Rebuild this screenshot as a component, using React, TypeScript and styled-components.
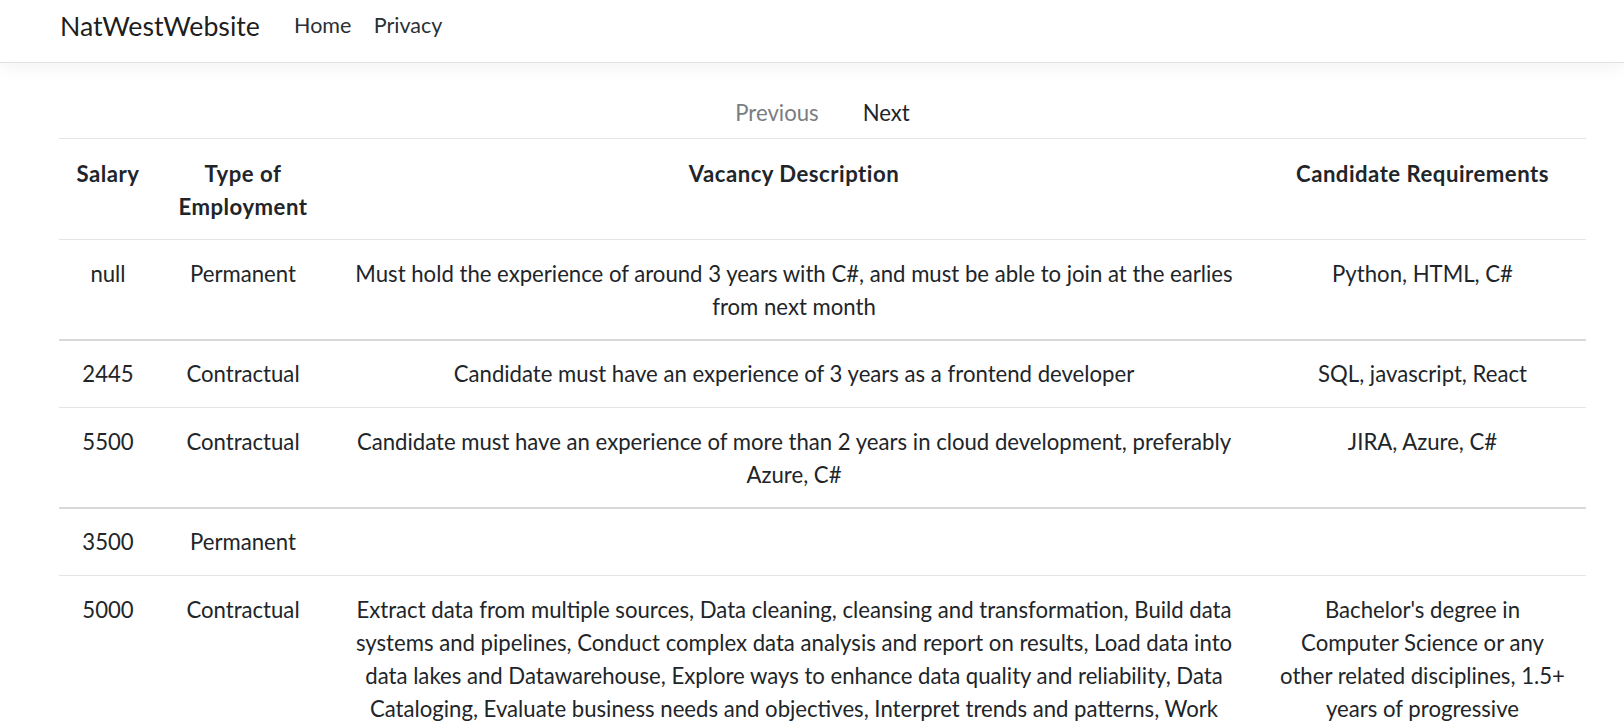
import React from "react";
import styled, { createGlobalStyle } from "styled-components";

const GlobalStyle = createGlobalStyle`
  * { box-sizing: border-box; }
  body {
    margin: 0;
    background: #ffffff;
    color: #212529;
    font-family: "Lato", "Noto Sans", "Liberation Sans", sans-serif;
    font-size: 22.15px;
    line-height: 1.5;
  }
`;

const NavBar = styled.header`
  height: 63px;
  border-bottom: 1px solid #e2e2e2;
  box-shadow: 0 5px 16px rgba(0, 0, 0, 0.05);
  background: #ffffff;
`;

const NavInner = styled.nav`
  height: 100%;
  display: flex;
  align-items: center;
  padding: 0 38px 10px 60px;
`;

const Brand = styled.a`
  font-size: 26.7px;
  line-height: 1;
  color: rgba(0, 0, 0, 0.9);
  text-decoration: none;
  margin-right: 23px;
`;

const NavLinks = styled.ul`
  display: flex;
  list-style: none;
  margin: 0;
  padding: 0;
`;

const NavLink = styled.a`
  display: block;
  padding: 0 11.2px;
  font-size: 21.5px;
  line-height: 1;
  color: #2b2f33;
  text-decoration: none;
`;

const Main = styled.main`
  padding: 25px 38px 0 59px;
`;

const Pager = styled.ul`
  display: flex;
  justify-content: center;
  list-style: none;
  margin: 0;
  padding: 0;
`;

const PageLink = styled.a<{ $disabled?: boolean }>`
  display: block;
  padding: 8.4px 22px;
  line-height: 33.6px;
  color: ${(p) => (p.$disabled ? "#7a7d80" : "#212529")};
  text-decoration: none;
`;

const Table = styled.table`
  width: 1527px;
  border-collapse: collapse;
  table-layout: fixed;
  border-top: 1px solid #e2e4e6;
`;

const Col = styled.col<{ $w: number }>`
  width: ${(p) => p.$w}px;
`;

const HeadCell = styled.th`
  padding: 17.2px 16.8px 16px;
  line-height: 1.5;
  font-weight: 700;
  letter-spacing: 0.5px;
  text-align: center;
  vertical-align: top;
  border-bottom: 1px solid #e2e4e6;
`;

const Cell = styled.td<{ $thick?: boolean }>`
  padding: 16.6px 16.8px ${(p) => (p.$thick ? "15.6px" : "16.6px")};
  line-height: 1.5;
  text-align: center;
  vertical-align: top;
  border-bottom: ${(p) => (p.$thick ? "2px solid #d7d9db" : "1px solid #e2e4e6")};
`;

type Vacancy = {
  salary: string;
  type: string;
  description: string;
  requirements: string;
  thick?: boolean;
};

const vacancies: Vacancy[] = [
  {
    salary: "null",
    type: "Permanent",
    description:
      "Must hold the experience of around 3 years with C#, and must be able to join at the earlies from next month",
    requirements: "Python, HTML, C#",
    thick: true,
  },
  {
    salary: "2445",
    type: "Contractual",
    description: "Candidate must have an experience of 3 years as a frontend developer",
    requirements: "SQL, javascript, React",
  },
  {
    salary: "5500",
    type: "Contractual",
    description:
      "Candidate must have an experience of more than 2 years in cloud development, preferably Azure, C#",
    requirements: "JIRA, Azure, C#",
    thick: true,
  },
  {
    salary: "3500",
    type: "Permanent",
    description: "",
    requirements: "",
  },
  {
    salary: "5000",
    type: "Contractual",
    description:
      "Extract data from multiple sources, Data cleaning, cleansing and transformation, Build data systems and pipelines, Conduct complex data analysis and report on results, Load data into data lakes and Datawarehouse, Explore ways to enhance data quality and reliability, Data Cataloging, Evaluate business needs and objectives, Interpret trends and patterns, Work closely with the stakeholders to deliver reliable data solutions",
    requirements:
      "Bachelor's degree in Computer Science or any other related disciplines, 1.5+ years of progressive experience in data engineering",
  },
];

export default function App() {
  return (
    <>
      <GlobalStyle />
      <NavBar>
        <NavInner>
          <Brand href="#">NatWestWebsite</Brand>
          <NavLinks>
            <li>
              <NavLink href="#">Home</NavLink>
            </li>
            <li>
              <NavLink href="#">Privacy</NavLink>
            </li>
          </NavLinks>
        </NavInner>
      </NavBar>
      <Main>
        <Pager>
          <li>
            <PageLink $disabled>Previous</PageLink>
          </li>
          <li>
            <PageLink href="#">Next</PageLink>
          </li>
        </Pager>
        <Table>
          <colgroup>
            <Col $w={98} />
            <Col $w={172} />
            <Col $w={930} />
            <Col $w={327} />
          </colgroup>
          <thead>
            <tr>
              <HeadCell>Salary</HeadCell>
              <HeadCell>Type of Employment</HeadCell>
              <HeadCell>Vacancy Description</HeadCell>
              <HeadCell>Candidate Requirements</HeadCell>
            </tr>
          </thead>
          <tbody>
            {vacancies.map((v, i) => (
              <tr key={i}>
                <Cell $thick={v.thick}>{v.salary}</Cell>
                <Cell $thick={v.thick}>{v.type}</Cell>
                <Cell $thick={v.thick}>{v.description}</Cell>
                <Cell $thick={v.thick}>{v.requirements}</Cell>
              </tr>
            ))}
          </tbody>
        </Table>
      </Main>
    </>
  );
}
